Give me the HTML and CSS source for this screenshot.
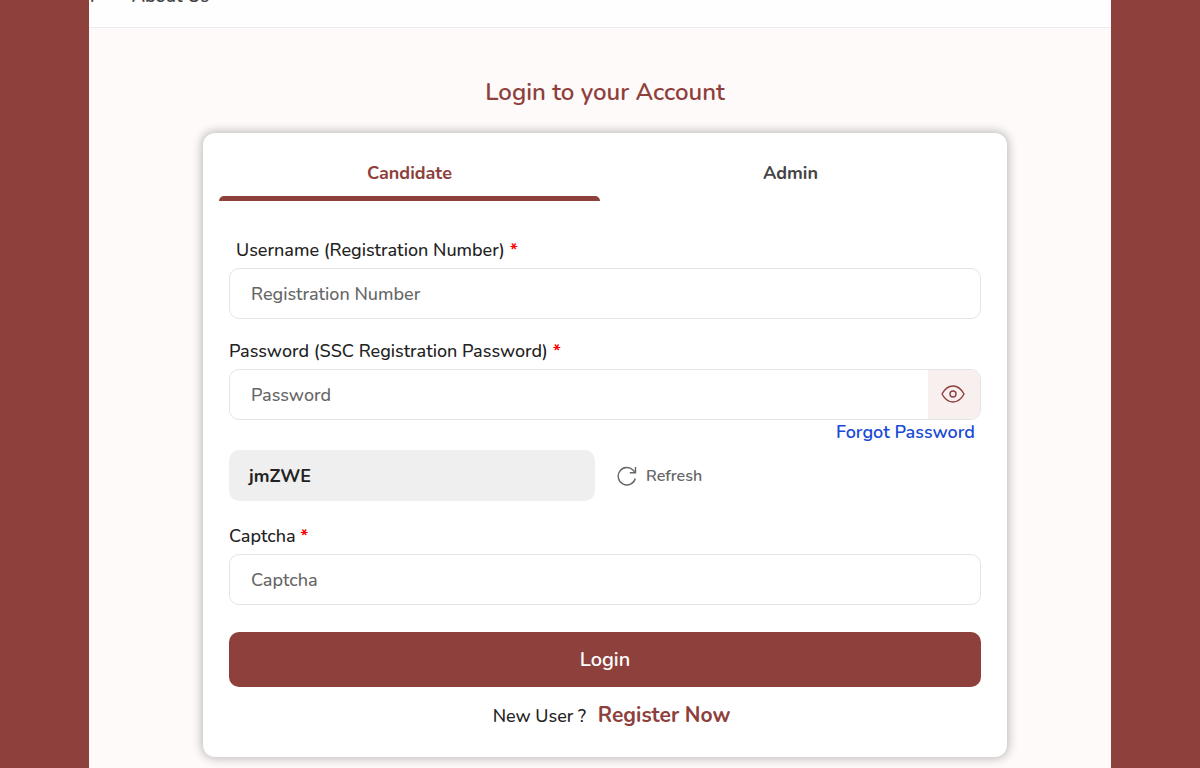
FILE: index.html
```
<!DOCTYPE html>
<html lang="en">
<head>
    <meta charset="UTF-8">
    <meta name="viewport" content="width=device-width, initial-scale=1.0">
    <title>Login</title>
    <link rel="stylesheet" href="styles.css">
</head>
<body>
    <div class="page">
        <header>
            <nav>
                <a href="#">r</a>
                <a href="#about">About Us</a>
            </nav>
        </header>

        <main>
            <h1>Login to your Account</h1>
            <div class="card">
                <div class="tabs" role="tablist">
                    <button type="button" class="tab active" role="tab" aria-selected="true">Candidate</button>
                    <button type="button" class="tab" role="tab" aria-selected="false">Admin</button>
                </div>

                <form>
                    <label class="indent" for="username">Username (Registration Number) <span>*</span></label>
                    <input type="text" id="username" placeholder="Registration Number" required>

                    <label for="password">Password (SSC Registration Password) <span>*</span></label>
                    <div class="password">
                        <input type="password" id="password" placeholder="Password" required>
                        <button type="button" class="eye" aria-label="Show password">
                            <svg width="24" height="20" viewBox="0 0 24 20" fill="none" stroke="#8d403c" stroke-width="1.4" stroke-linejoin="round">
                                <path d="M1 10C4 4.500 7.500 2 12 2S20 4.500 23 10C20 15.500 16.500 18 12 18S4 15.500 1 10Z"/>
                                <circle cx="12" cy="10" r="3"/>
                            </svg>
                        </button>
                    </div>
                    <a href="#" class="forgot">Forgot Password</a>

                    <div class="captcha-row">
                        <output class="captcha">jmZWE</output>
                        <button type="button" class="refresh">
                            <svg width="20" height="20" viewBox="0 0 20 20" fill="none" stroke="#666" stroke-width="1.4">
                                <path d="M18.300 12.500A8.700 8.700 0 1 1 16.200 4.200L18.400 6.600"/>
                                <path d="M18.500 1V6.700H12.800"/>
                            </svg>
                            Refresh
                        </button>
                    </div>

                    <label for="captcha">Captcha <span>*</span></label>
                    <input type="text" id="captcha" placeholder="Captcha" required>

                    <button type="submit" class="login">Login</button>
                </form>

                <p class="register">New User ? <a href="#">Register Now</a></p>
            </div>
        </main>
    </div>
</body>
</html>
```
FILE: styles.css
```
* {
    box-sizing: border-box;
}
body {
    margin: 0;
    padding: 0 89px;
    background: #8d403c;
    color: #222;
    font-family: Nunito, Lato, sans-serif;
    font-size: 18px;
    line-height: 24px;
    overflow: hidden;
}
.page {
    background: #fefaf9;
    min-height: 100vh;
    overflow: hidden;
}
header {
    margin-top: -36px;
    padding: 20px 1px 19px;
    background: #fefefe;
    border-bottom: 1px solid #ececee;
}
nav {
    display: flex;
    gap: 35px;
}
nav a {
    color: #444;
    font-weight: 600;
    text-decoration: none;
}
main {
    padding: 48px 104px 32px 114px;
}
h1 {
    margin: 0 0 25px;
    color: #8d403c;
    font-size: 24px;
    font-weight: 600;
    line-height: 32px;
    text-align: center;
}
.card {
    padding: 15px 16px 29px;
    background: #fff;
    border-radius: 12px;
    box-shadow: 0 0 10px 2px rgba(0, 0, 0, 0.24);
}
button, input {
    font: inherit;
}
button {
    border: none;
    background: none;
    cursor: pointer;
}
.tabs {
    display: flex;
    margin-right: 10px;
}
.tab {
    position: relative;
    flex: 1;
    height: 53px;
    padding: 0 0 4px;
    color: #444;
    font-weight: 700;
}
.tab.active {
    color: #8d403c;
}
.tab.active::after {
    content: '';
    position: absolute;
    left: 0;
    right: 0;
    bottom: 0;
    height: 5px;
    background: #8d403c;
    border-radius: 5px 5px 0 0;
}
form {
    display: flex;
    flex-direction: column;
    padding: 37px 10px 0;
}
label {
    margin-bottom: 6px;
    font-weight: 500;
}
label.indent {
    padding-left: 7px;
}
label span {
    color: #f00;
    font-weight: 700;
}
input {
    width: 100%;
    height: 51px;
    margin-bottom: 20px;
    padding: 0 21px;
    background: #fff;
    border: 1px solid #e4e4e4;
    border-radius: 10px;
    color: #222;
}
input::placeholder {
    color: #666;
    font-weight: 500;
    opacity: 1;
}
.password {
    display: flex;
    height: 51px;
    border: 1px solid #e4e4e4;
    border-radius: 10px;
    overflow: hidden;
}
.password input {
    height: 49px;
    margin: 0;
    border: none;
}
.eye {
    flex: none;
    width: 52px;
    padding: 0 2px 2px 0;
    background: #f8efef;
}
.eye svg {
    display: block;
    margin: 0 auto;
}
.forgot {
    align-self: flex-end;
    margin-right: 6px;
    color: #1a4bd6;
    font-weight: 600;
    text-decoration: none;
}
.captcha-row {
    display: flex;
    align-items: center;
    gap: 22px;
    margin: 6px 0 23px;
}
.captcha {
    width: 366px;
    padding: 14px 20px 13px;
    background: #efefef;
    border-radius: 10px;
    font-weight: 700;
}
.refresh {
    display: flex;
    align-items: center;
    gap: 9px;
    padding: 0;
    color: #666;
    font-size: 16px;
    font-weight: 600;
}
.login {
    height: 55px;
    margin-top: 7px;
    background: #8d403c;
    border-radius: 10px;
    color: #fff;
    font-size: 20px;
    font-weight: 600;
}
.register {
    margin: 16px 0 0 13px;
    text-align: center;
    font-weight: 500;
}
.register a {
    margin-left: 7px;
    color: #8d403c;
    font-size: 21px;
    font-weight: 700;
    text-decoration: none;
}
```
